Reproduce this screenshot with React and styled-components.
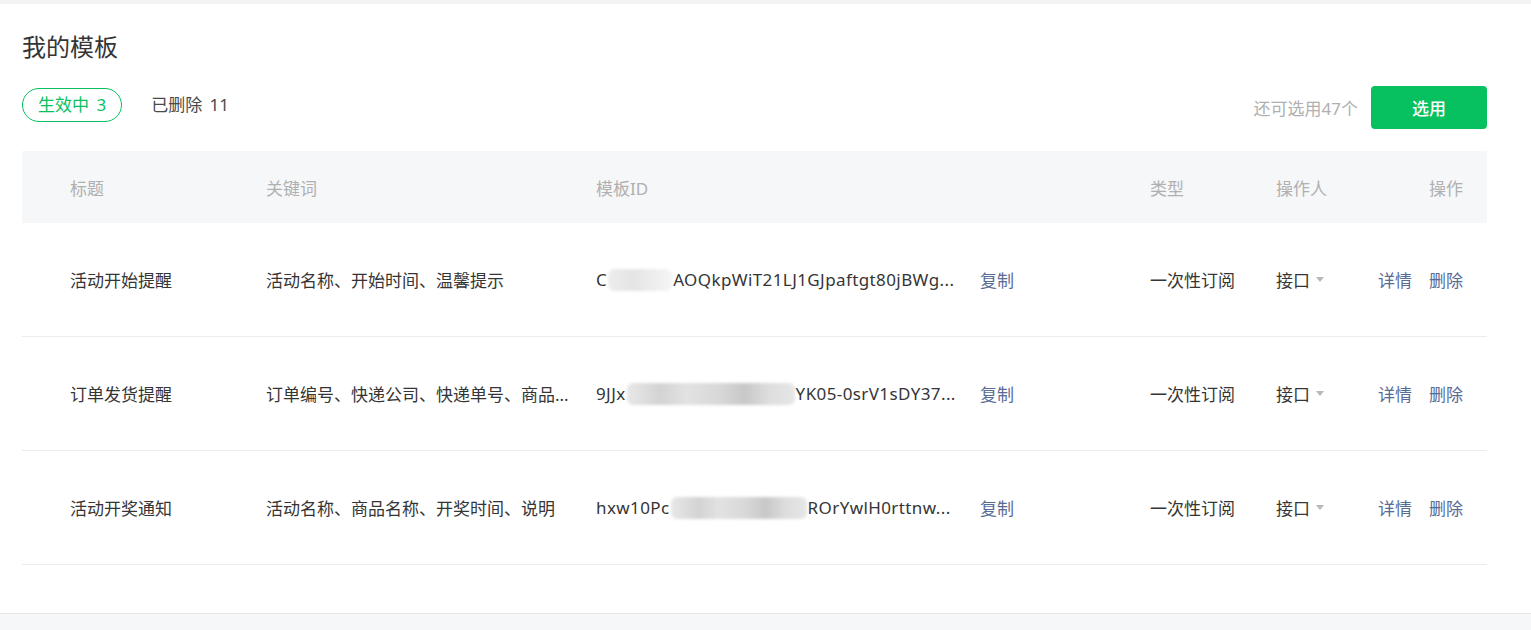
import React from 'react';
import styled, { createGlobalStyle } from 'styled-components';

const GlobalStyle = createGlobalStyle`
  html, body {
    margin: 0;
    padding: 0;
    background: #f6f7f9;
  }
  body {
    font-family: "Noto Sans", "Noto Sans CJK SC", sans-serif;
    color: #353535;
  }
`;

const templates = [
  {
    title: '活动开始提醒',
    keywords: '活动名称、开始时间、温馨提示',
    idHead: 'C',
    redact: 64,
    redactTone: 'light',
    idTail: 'AOQkpWiT21LJ1GJpaftgt80jBWg...',
  },
  {
    title: '订单发货提醒',
    keywords: '订单编号、快递公司、快递单号、商品...',
    idHead: '9JJx',
    redact: 168,
    idTail: 'YK05-0srV1sDY37...',
  },
  {
    title: '活动开奖通知',
    keywords: '活动名称、商品名称、开奖时间、说明',
    idHead: 'hxw10Pc',
    redact: 136,
    idTail: 'ROrYwlH0rttnw...',
  },
];

export default function App() {
  return (
    <>
      <GlobalStyle />
      <Page>
        <Card>
          <Title>我的模板</Title>

          <Toolbar>
            <Tabs>
              <Tab active>生效中 3</Tab>
              <Tab>已删除 11</Tab>
            </Tabs>
            <Actions>
              <Quota>还可选用47个</Quota>
              <PrimaryButton>选用</PrimaryButton>
            </Actions>
          </Toolbar>

          <Table>
            <HeadRow>
              <Cell first>标题</Cell>
              <Cell>关键词</Cell>
              <Cell>模板ID</Cell>
              <Cell>类型</Cell>
              <Cell>操作人</Cell>
              <Cell last>操作</Cell>
            </HeadRow>

            {templates.map((t) => (
              <Row key={t.title}>
                <Cell first>{t.title}</Cell>
                <Cell>{t.keywords}</Cell>
                <Cell>
                  <IdText>
                    {t.idHead}
                    <Redact width={t.redact} light={t.redactTone === 'light'} />
                    {t.idTail}
                  </IdText>
                  <Link>复制</Link>
                </Cell>
                <Cell>一次性订阅</Cell>
                <Cell>
                  <Select>
                    接口
                    <Caret />
                  </Select>
                </Cell>
                <Cell last>
                  <Link>详情</Link>
                  <Link>删除</Link>
                </Cell>
              </Row>
            ))}
          </Table>
        </Card>
      </Page>
    </>
  );
}

const Page = styled.div`
  padding-top: 4px;
  background: #f3f3f4;
`;

const Card = styled.div`
  background: #fff;
  padding: 28px 44px 48px 22px;
  border-bottom: 1px solid #e7e8ea;
`;

const Title = styled.h1`
  margin: 0;
  font-size: 24px;
  line-height: 30px;
  font-weight: 400;
  color: #353535;
`;

const Toolbar = styled.div`
  display: flex;
  justify-content: space-between;
  align-items: flex-start;
  margin-top: 24px;
`;

const Tabs = styled.div`
  display: flex;
  align-items: center;
  gap: 13px;
  margin-top: 2px;
`;

const Tab = styled.div`
  box-sizing: border-box;
  height: 34px;
  line-height: 32px;
  padding: 0 15px;
  font-size: 17px;
  border-radius: 17px;
  border: 1px solid ${(p) => (p.active ? '#07c160' : 'transparent')};
  color: ${(p) => (p.active ? '#07c160' : '#4a4a4a')};
  word-spacing: 3px;
`;

const Actions = styled.div`
  display: flex;
  align-items: center;
  gap: 13px;
`;

const Quota = styled.span`
  font-size: 17px;
  color: #b0b0b0;
`;

const PrimaryButton = styled.button`
  width: 116px;
  height: 43px;
  border: 0;
  border-radius: 4px;
  background: #07c160;
  color: #fff;
  font-family: inherit;
  font-size: 17px;
  font-weight: 500;
  cursor: pointer;
`;

const Table = styled.div`
  margin-top: 22px;
`;

const columns = '244px 330px 554px 126px 102px 109px';

const HeadRow = styled.div`
  display: grid;
  grid-template-columns: ${columns};
  align-items: center;
  height: 72px;
  background: #f6f7f9;
  color: #b0b0b0;
  font-size: 17px;
`;

const Row = styled.div`
  display: grid;
  grid-template-columns: ${columns};
  align-items: center;
  height: 113px;
  border-bottom: 1px solid #ececec;
  font-size: 17px;
  color: #353535;
`;

const Cell = styled.div`
  display: flex;
  align-items: center;
  white-space: nowrap;
  padding-left: ${(p) => (p.first ? '48px' : '0')};
  padding-right: ${(p) => (p.last ? '24px' : '0')};
  justify-content: ${(p) => (p.last ? 'flex-end' : 'flex-start')};
  gap: ${(p) => (p.last ? '17px' : '0')};
`;

const IdText = styled.span`
  display: inline-flex;
  align-items: center;
  width: 384px;
  letter-spacing: 0.4px;
`;

const Redact = styled.span`
  display: inline-block;
  width: ${(p) => p.width}px;
  height: 22px;
  margin: 0 1px;
  background: ${(p) =>
    p.light
      ? 'linear-gradient(90deg, #ededed, #e4e4e4 40%, #eeeeee 70%, #f4f4f4)'
      : 'linear-gradient(90deg, #e8e8e8, #d3d3d3 20%, #e2e2e2 35%, #d8d8d8 55%, #c8c8c8 70%, #dedede 85%, #e6e6e6)'};
  filter: blur(1.5px);
  border-radius: 6px;
`;

const Link = styled.a`
  color: #576b95;
  cursor: pointer;
`;

const Select = styled.span`
  display: inline-flex;
  align-items: center;
  gap: 6px;
`;

const Caret = styled.i`
  width: 0;
  height: 0;
  border-left: 4px solid transparent;
  border-right: 4px solid transparent;
  border-top: 5px solid #b8b8b8;
`;
